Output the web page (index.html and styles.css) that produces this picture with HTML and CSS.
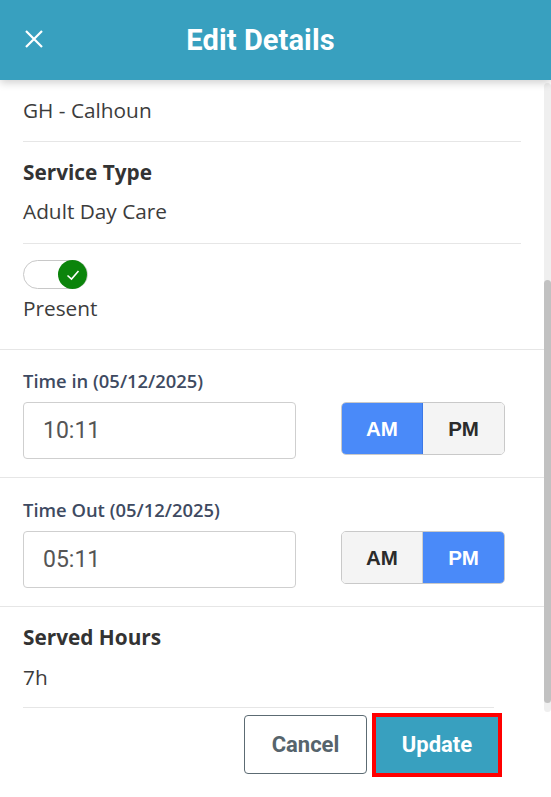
FILE: index.html
```html
<!DOCTYPE html>
<html>
<head>
<meta charset="utf-8">
<link rel="stylesheet" href="styles.css">
</head>
<body>
<div class="app">
  <header class="topbar">
    <button class="close" aria-label="Close">
      <svg width="18" height="18" viewBox="0 0 18 18"><path d="M1 1L17 17M17 1L1 17" stroke="#fff" stroke-width="2.2" fill="none"/></svg>
    </button>
    <h1 class="title">Edit Details</h1>
  </header>
  <div class="body">
    <main class="content">
      <section class="row row-first">
        <div class="value">GH - Calhoun</div>
      </section>
      <section class="row row-service">
        <div class="label">Service Type</div>
        <div class="value mt">Adult Day Care</div>
      </section>
      <section class="row row-toggle">
        <div class="toggle">
          <span class="knob">
            <svg width="18" height="18" viewBox="0 0 18 18"><path d="M3.5 9.5L7.5 13L14.5 5" stroke="#fff" stroke-width="1.6" fill="none"/></svg>
          </span>
        </div>
        <div class="value present">Present</div>
      </section>
      <section class="block">
        <div class="tlabel">Time in (05/12/2025)</div>
        <div class="timeline">
          <div class="input">10:11</div>
          <div class="ampm">
            <span class="seg active">AM</span><span class="seg">PM</span>
          </div>
        </div>
      </section>
      <section class="block">
        <div class="tlabel">Time Out (05/12/2025)</div>
        <div class="timeline">
          <div class="input">05:11</div>
          <div class="ampm">
            <span class="seg">AM</span><span class="seg active">PM</span>
          </div>
        </div>
      </section>
      <section class="row row-hours">
        <div class="label">Served Hours</div>
        <div class="value mt2">7h</div>
      </section>
    </main>
    <div class="scrollbar"><div class="thumb"></div></div>
  </div>
  <footer class="footer">
    <button class="btn cancel">Cancel</button>
    <button class="btn update">Update</button>
  </footer>
</div>
</body>
</html>
```

FILE: styles.css
```css
* { box-sizing: border-box; }
html, body { margin: 0; padding: 0; background: #fff; }
body { font-family: "Open Sans", "Liberation Sans", sans-serif; color: #3a3a3a; width: 551px; height: 797px; overflow: hidden; }
.app { display: flex; flex-direction: column; height: 797px; }
.topbar {
  height: 80px; background: #38a0bf; display: flex; align-items: center;
  position: relative; z-index: 2; box-shadow: 0 3px 8px rgba(0,0,0,0.18);
  flex-shrink: 0;
}
.close { position: absolute; left: 25px; top: 30px; width: 18px; height: 18px; padding: 0; border: 0; background: none; display: flex; }
.title { margin: 0; width: 100%; text-align: center; font-family: Roboto, "Liberation Sans", sans-serif; font-weight: 700; font-size: 29px; color: #fff; letter-spacing: 0.1px; padding-right: 30px; }

.body { display: flex; height: 632px; flex-shrink: 0; }
.content { width: 544px; display: flex; flex-direction: column; }
.scrollbar { width: 7px; margin-top: 3px; margin-bottom: 0; background: #efefef; border-radius: 4px; display: flex; flex-direction: column; padding-top: 197px; padding-bottom: 9px; }
.thumb { flex: 1; background: #c1c1c1; border-radius: 4px; }

.row { margin: 0 23px; border-bottom: 1px solid #e6e6e6; }
.value { font-size: 20.8px; line-height: 28px; color: #3c3c3c; }
.label { font-size: 20.8px; line-height: 28px; font-weight: 700; color: #333; }
.row-first { padding: 16px 0 17px; }
.row-service { padding: 16px 0 18px; }
.mt { margin-top: 11px; }
.row-toggle { margin: 0; padding: 16px 23px 27px; border-bottom: 1px solid #e6e6e6; }
.toggle { width: 65px; height: 29px; border: 1px solid #c8c8c8; border-radius: 15px; background: #fff; position: relative; }
.knob { position: absolute; right: 0px; top: -1px; width: 29px; height: 29px; border-radius: 50%; background: #0b840b; display: flex; align-items: center; justify-content: center; }
.present { margin-top: 5px; }

.block { padding: 19px 23px 0; height: 128px; border-bottom: 1px solid #e6e6e6; }
.block + .block { height: 129px; padding-top: 20px; }
.tlabel { font-size: 18.4px; line-height: 24px; font-weight: 600; color: #3e4a61; }
.timeline { display: flex; align-items: flex-start; margin-top: 9px; }
.input { width: 273px; height: 57px; border: 1px solid #cfcfcf; border-radius: 4px; padding-left: 19px; display: flex; align-items: center; font-family: Roboto, "Liberation Sans", sans-serif; font-size: 23px; color: #555; }
.ampm { display: flex; margin-left: 45px; height: 53px; border-radius: 5px; overflow: hidden; border: 1px solid #c9c9c9; }
.seg { width: 81px; display: flex; align-items: center; justify-content: center; font-family: "Liberation Sans", Arial, sans-serif; font-size: 20.5px; font-weight: 700; color: #2b2b2b; background: #f4f4f4; }
.seg.active { background: #4a8af9; color: #fff; }
.ampm .seg:first-child { border-right: 1px solid #cfcfcf; }
.ampm .seg.active:first-child { border-right-color: #3b78e6; }

.row-hours { padding: 16px 0 16px; margin-right: 50px; }
.mt2 { margin-top: 12px; }

.footer { display: flex; justify-content: flex-end; align-items: center; gap: 5px; padding: 0 49px 0 0; margin-top: 0; height: 65px; }
.btn { font-family: Roboto, "Liberation Sans", sans-serif; font-weight: 700; font-size: 22px; cursor: pointer; }
.cancel { width: 123px; height: 59px; border: 1px solid #5c6b73; border-radius: 4px; background: #fff; color: #56646c; }
.update { width: 130px; height: 64px; border: 4px solid #ff0000; background: #38a0bf; color: #fff; border-radius: 0; }
```
